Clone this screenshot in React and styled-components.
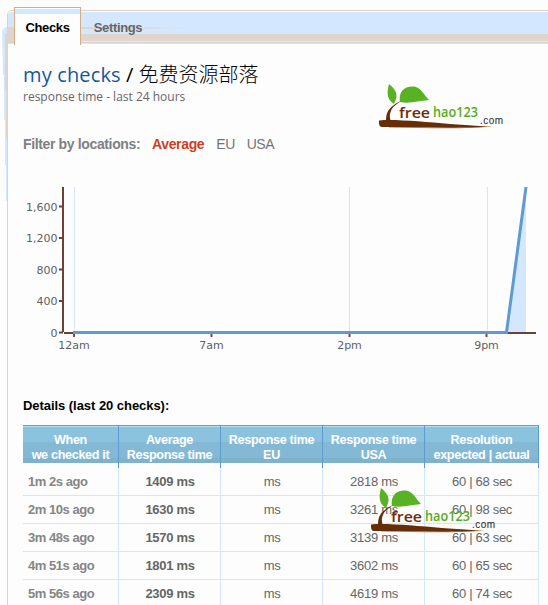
import React from "react";
import styled, { createGlobalStyle } from "styled-components";

const sans = `"Liberation Sans", Arial, sans-serif`;
const humanist = `"Open Sans", "Noto Sans CJK SC", sans-serif`;

const Global = createGlobalStyle`
  * { box-sizing: border-box; }
  html, body { margin: 0; background: #fdfdfd; overflow: hidden; }
  body { font-family: ${sans}; color: #666; }
`;

const Page = styled.div`
  position: relative;
  width: 548px;
  height: 605px;
  overflow: hidden;
  padding-left: 7px;
`;

const Shadow = styled.svg`
  position: absolute;
  left: 0;
  top: 0;
`;

const Panel = styled.main`
  position: relative;
  margin-top: 10px;
  height: 595px;
  border-left: 1px solid #ded3ca;
  border-top: 1px solid #e2d2c4;
  border-top-left-radius: 5px;
  background: #fdfdfd;
`;

const TabBar = styled.nav`
  display: flex;
  height: 33px;
  margin-top: 1px;
  padding-left: 6px;
  border-top-left-radius: 4px;
  background:
    linear-gradient(#e0d4cb, #e0d4cb) 0 15px / 6px 15px no-repeat,
    linear-gradient(90deg, #e0d4cb 60%, #e0d4cb00) 6px 15px / 175px 2px no-repeat,
    linear-gradient(#d3e8fe 0 22px, #e0d4cb 22px 29px, #e3e9ef 29px 30px, #d0d4d8 30px 31px, #dfe6ec 31px 32px, #fdfdfd 32px);
`;

const Tab = styled.a`
  height: ${(p) => (p.$active ? 38 : 33)}px;
  margin-top: ${(p) => (p.$active ? -5 : 0)}px;
  width: ${(p) => (p.$active ? 67 : 74)}px;
  padding-top: ${(p) => (p.$active ? 12 : 8)}px;
  border: ${(p) => (p.$active ? "1px solid #d2ad82" : "0")};
  border-bottom: 0;
  background: ${(p) => (p.$active ? "linear-gradient(#fdfdfd 0 1px, #d3e8fe 1px 6px, #fdfdfd 6px)" : "none")};
  color: ${(p) => (p.$active ? "#000" : "#666")};
  font: bold 13px/15px ${sans};
  letter-spacing: -0.35px;
  text-align: center;
`;

const Title = styled.h1`
  margin: 15px 0 0 15px;
  height: 29px;
  font: 400 20px/30px ${humanist};
  color: #000;
  white-space: nowrap;
`;

const TitleLink = styled.a`
  color: #14599b;
  letter-spacing: 0.15px;
`;

const TitleName = styled.span`
  font-weight: 300;
`;

const Subtitle = styled.p`
  margin: 0 0 0 15px;
  font: 12px/16px ${humanist};
  color: #666;
`;

const Filters = styled.div`
  display: flex;
  margin: 30px 0 0 15px;
  font: 14px/18px ${sans};
  color: #7b7b7b;
`;

const FilterLabel = styled.b`
  width: 129px;
  letter-spacing: -0.36px;
  color: #7f8083;
`;

const Filter = styled.a`
  margin-right: 12px;
  letter-spacing: ${(p) => (p.$active ? "-0.35px" : "-0.5px")};
  color: ${(p) => (p.$active ? "#cf3f24" : "#747474")};
  font-weight: ${(p) => (p.$active ? "bold" : "normal")};
`;

const Chart = styled.svg`
  display: block;
  margin-top: 32px;
`;

const AxisLabel = styled.text`
  font: 11px "DejaVu Sans", Verdana, sans-serif;
  fill: #606060;
`;

const Heading = styled.h2`
  margin: 42px 0 0 15px;
  font: bold 13px/17px ${sans};
  letter-spacing: -0.05px;
  color: #000;
`;

const columns = "96px 102px 102px 102px 114px";

const Table = styled.div`
  width: 516px;
  margin: 11px 0 0 15px;
`;

const HeadRow = styled.div`
  display: grid;
  grid-template-columns: ${columns};
  height: 43px;
  border-top: 1px solid #5f9fd2;
`;

const HeadCell = styled.div`
  border-right: 1px solid #5d9bd0;
  padding-top: 7px;
  background: linear-gradient(#b8e0f2 0 1px, #8bc2de 1px 16px, #84b9d6 16px 32px, #7fb2cc 32px 37px, transparent 37px);
  color: #fff;
  font: bold 12.6px/15px ${sans};
  letter-spacing: -0.32px;
  text-align: center;
  white-space: pre-line;
`;

const Row = styled.div`
  display: grid;
  grid-template-columns: ${columns};
  height: 28px;
  border-bottom: 1px solid #d3e7fb;
`;

const Cell = styled.div`
  border-right: 1px solid #d3e7fb;
  padding-left: ${(p) => (p.$when ? 5 : 1)}px;
  text-align: ${(p) => (p.$when ? "left" : "center")};
  font: ${(p) => (p.$strong ? "bold" : "normal")} 13px/27px ${sans};
  letter-spacing: ${(p) => (p.$when ? "-0.45px" : "-0.3px")};
  color: ${(p) => (p.$when ? "#858585" : "#666")};
`;

const Logo = styled.svg`
  position: absolute;
  left: ${(p) => p.$x}px;
  top: ${(p) => p.$y}px;
`;

const LogoWord = styled.text`
  font: 600 14px "Open Sans", sans-serif;
`;

const rows = [
  ["1m 2s ago", "1409 ms", "2818 ms", "60 | 68 sec"],
  ["2m 10s ago", "1630 ms", "3261 ms", "60 | 98 sec"],
  ["3m 48s ago", "1570 ms", "3139 ms", "60 | 63 sec"],
  ["4m 51s ago", "1801 ms", "3602 ms", "60 | 65 sec"],
  ["5m 56s ago", "2309 ms", "4619 ms", "60 | 74 sec"],
];

const heads = [
  "When\nwe checked it",
  "Average\nResponse time",
  "Response time\nEU",
  "Response time\nUSA",
  "Resolution\nexpected | actual",
];

function Watermark({ x, y }) {
  return (
    <Logo $x={x} $y={y} width="128" height="46" viewBox="0 0 128 46">
      <path d="M10 0C15 4 19 9 17 15L15 20C7 15 8 8 10 0Z" fill="#58b224" />
      <path d="M21 18C19 7 27 1 37 3C43 5 45 11 50 16C40 17 30 20 21 18Z" fill="#58b224" />
      <path d="M22 17C18 20 13 23 12 27C10 31 11 34 12 38L7 38C7 30 8 26 15 21C17 19 20 18 22 17Z" fill="#662e08" />
      <path d="M10 41H60L114 42.5C92 45 55 44.5 10 43.5Z" fill="#bd7940" />
      <path d="M0 36.5C16 35 45 38 71 40L108 42.5C90 43.7 60 43.5 34 43L3 43C0 43 0 40 0 36.5Z" fill="#662e08" />
      <LogoWord x="20" y="34" fill="#6a2d0b" textLength="31" lengthAdjust="spacingAndGlyphs">free</LogoWord>
      <LogoWord x="54" y="33" fill="#55ad20" textLength="45" lengthAdjust="spacingAndGlyphs">hao123</LogoWord>
      <text x="101" y="40" fontFamily="Liberation Sans, sans-serif" fontSize="10" fill="#222" textLength="23">.com</text>
    </Logo>
  );
}

export default function App() {
  return (
    <Page>
      <Global />
      <Shadow width="548" height="210">
        <path d="M2 32Q3 27 8 27V201H6V165H5V120H4V75H3Z" fill="#d3e8fe" />
        <path d="M5 34H8V140H6V90H5Z" fill="#e0d4cb" />
      </Shadow>
      <Panel>
        <TabBar>
          <Tab $active>Checks</Tab>
          <Tab>Settings</Tab>
        </TabBar>
        <Title><TitleLink>my checks</TitleLink> / <TitleName>免费资源部落</TitleName></Title>
        <Subtitle>response time - last 24 hours</Subtitle>
        <Filters>
          <FilterLabel>Filter by locations:</FilterLabel>
          <Filter $active>Average</Filter>
          <Filter>EU</Filter>
          <Filter>USA</Filter>
        </Filters>
        <Chart width="540" height="170" viewBox="8 185 540 170">
          {[74, 349, 487].map((x) => (
            <rect key={x} x={x} y="187" width="1" height="145" fill="#d6e6f7" />
          ))}
          <path d="M507 332L526 187V332Z" fill="#d3e8fe" />
          <path d="M63 187V332M64 333H536" stroke="#6b4237" strokeWidth="2" fill="none" />
          {["1,600", "1,200", "800", "400", "0"].map((t, i) => (
            <g key={t}>
              <rect x="59" y={205.5 + i * 31.5} width="4" height="2" fill="#6b4237" />
              <AxisLabel x="57.5" y={210.5 + i * 31.5} textAnchor="end">{t}</AxisLabel>
            </g>
          ))}
          {[["12am", 74], ["7am", 211.5], ["2pm", 349.5], ["9pm", 486.5]].map(([t, x]) => (
            <g key={t}>
              <rect x={x - 1} y="333" width="2" height="4" fill="#794b40" />
              <AxisLabel x={x} y="349" textAnchor="middle">{t}</AxisLabel>
            </g>
          ))}
          <path d="M73 332.5H506.5L526 187" fill="none" stroke="#5e9bd1" strokeWidth="3" />
        </Chart>
        <Heading>Details (last 20 checks):</Heading>
        <Table>
          <HeadRow>{heads.map((h) => <HeadCell key={h}>{h}</HeadCell>)}</HeadRow>
          {rows.map(([when, avg, usa, res]) => (
            <Row key={when}>
              <Cell $when $strong>{when}</Cell>
              <Cell $strong>{avg}</Cell>
              <Cell>ms</Cell>
              <Cell>{usa}</Cell>
              <Cell>{res}</Cell>
            </Row>
          ))}
        </Table>
      </Panel>
      <Watermark x={379} y={84} />
      <Watermark x={371} y={488} />
    </Page>
  );
}
